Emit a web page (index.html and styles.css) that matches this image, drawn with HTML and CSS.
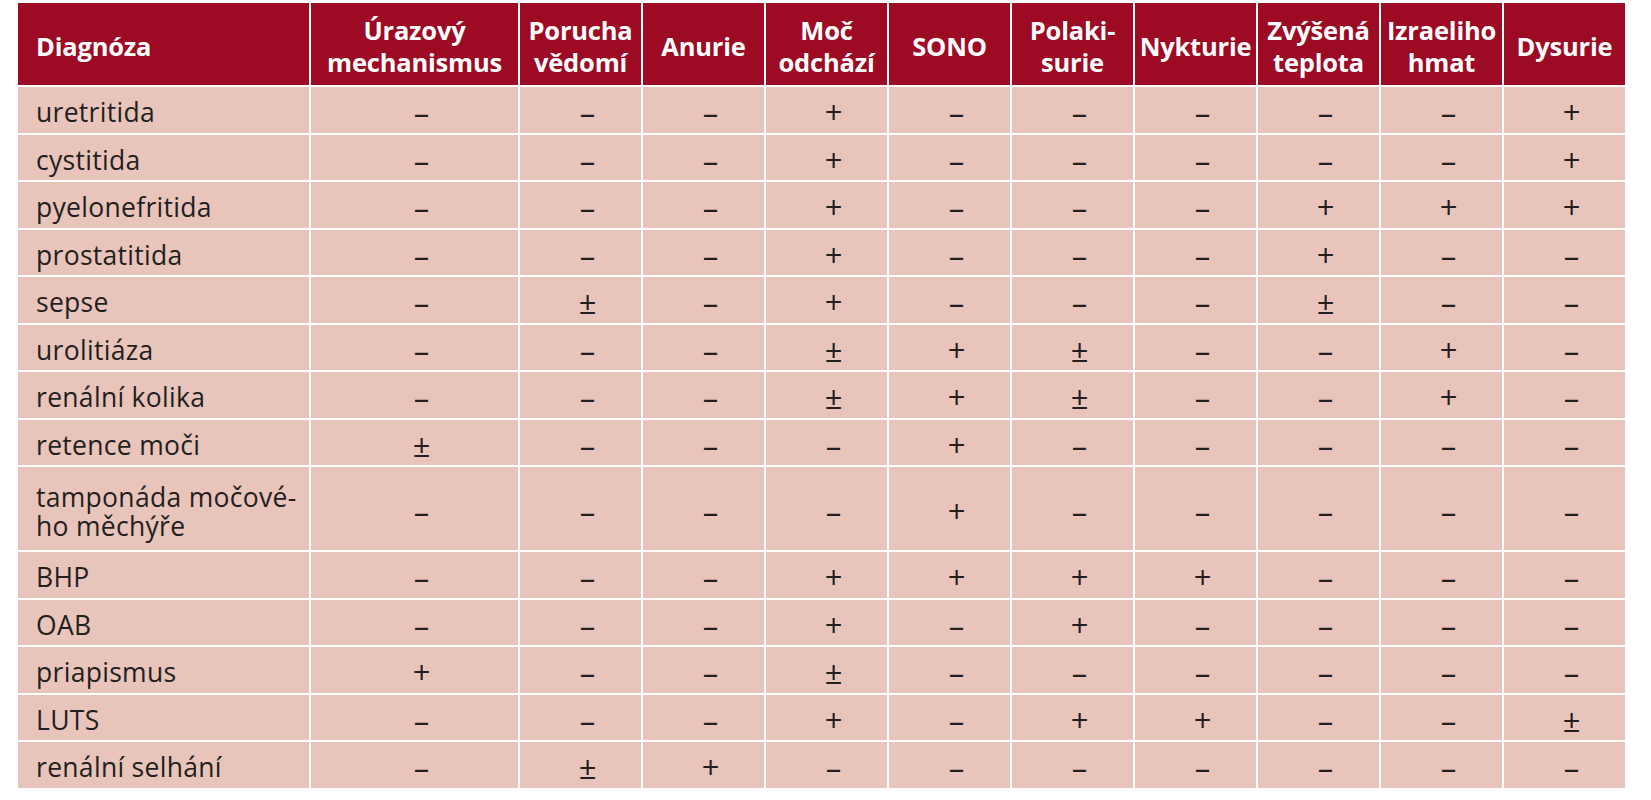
FILE: index.html
```html
<!DOCTYPE html>
<html lang="cs">
<head>
<meta charset="utf-8">
<title>Diagnóza</title>
<link rel="stylesheet" href="styles.css">
</head>
<body>
<table class="dx">
  <colgroup>
    <col class="c-diag">
    <col class="c-wide">
    <col class="c-std"><col class="c-std"><col class="c-std"><col class="c-std">
    <col class="c-std"><col class="c-std"><col class="c-std"><col class="c-std"><col class="c-std">
  </colgroup>
  <thead>
    <tr>
      <th class="h-diag">Diagnóza</th>
      <th>Úrazový<br>mechanismus</th>
      <th>Porucha<br>vědomí</th>
      <th>Anurie</th>
      <th>Moč<br>odchází</th>
      <th>SONO</th>
      <th>Polaki-<br>surie</th>
      <th>Nykturie</th>
      <th>Zvýšená<br>teplota</th>
      <th>Izraeliho<br>hmat</th>
      <th>Dysurie</th>
    </tr>
  </thead>
  <tbody>
    <tr><td class="d">uretritida</td><td>–</td><td>–</td><td>–</td><td>+</td><td>–</td><td>–</td><td>–</td><td>–</td><td>–</td><td>+</td></tr>
    <tr><td class="d">cystitida</td><td>–</td><td>–</td><td>–</td><td>+</td><td>–</td><td>–</td><td>–</td><td>–</td><td>–</td><td>+</td></tr>
    <tr><td class="d">pyelonefritida</td><td>–</td><td>–</td><td>–</td><td>+</td><td>–</td><td>–</td><td>–</td><td>+</td><td>+</td><td>+</td></tr>
    <tr><td class="d">prostatitida</td><td>–</td><td>–</td><td>–</td><td>+</td><td>–</td><td>–</td><td>–</td><td>+</td><td>–</td><td>–</td></tr>
    <tr><td class="d">sepse</td><td>–</td><td>±</td><td>–</td><td>+</td><td>–</td><td>–</td><td>–</td><td>±</td><td>–</td><td>–</td></tr>
    <tr><td class="d">urolitiáza</td><td>–</td><td>–</td><td>–</td><td>±</td><td>+</td><td>±</td><td>–</td><td>–</td><td>+</td><td>–</td></tr>
    <tr><td class="d">renální kolika</td><td>–</td><td>–</td><td>–</td><td>±</td><td>+</td><td>±</td><td>–</td><td>–</td><td>+</td><td>–</td></tr>
    <tr><td class="d">retence moči</td><td>±</td><td>–</td><td>–</td><td>–</td><td>+</td><td>–</td><td>–</td><td>–</td><td>–</td><td>–</td></tr>
    <tr class="tall"><td class="d"><span class="ln">tamponáda močové-</span><span class="ln">ho měchýře</span></td><td>–</td><td>–</td><td>–</td><td>–</td><td>+</td><td>–</td><td>–</td><td>–</td><td>–</td><td>–</td></tr>
    <tr><td class="d">BHP</td><td>–</td><td>–</td><td>–</td><td>+</td><td>+</td><td>+</td><td>+</td><td>–</td><td>–</td><td>–</td></tr>
    <tr><td class="d">OAB</td><td>–</td><td>–</td><td>–</td><td>+</td><td>–</td><td>+</td><td>–</td><td>–</td><td>–</td><td>–</td></tr>
    <tr><td class="d">priapismus</td><td>+</td><td>–</td><td>–</td><td>±</td><td>–</td><td>–</td><td>–</td><td>–</td><td>–</td><td>–</td></tr>
    <tr><td class="d">LUTS</td><td>–</td><td>–</td><td>–</td><td>+</td><td>–</td><td>+</td><td>+</td><td>–</td><td>–</td><td>±</td></tr>
    <tr><td class="d">renální selhání</td><td>–</td><td>±</td><td>+</td><td>–</td><td>–</td><td>–</td><td>–</td><td>–</td><td>–</td><td>–</td></tr>
  </tbody>
</table>
</body>
</html>
```

FILE: styles.css
```css
html, body {
  margin: 0;
  padding: 0;
  background: #ffffff;
}

body {
  padding: 1px 0 0 16px;
  font-family: "Open Sans", "Noto Sans", "Liberation Sans", sans-serif;
}

.dx {
  table-layout: fixed;
  border-collapse: separate;
  border-spacing: 2px;
  width: 1611px;
}

.c-diag { width: 291px; }
.c-wide { width: 207px; }
.c-std { width: 121px; }

.dx th {
  background: #9c0a24;
  color: #ffffff;
  font-weight: 700;
  font-size: 25.5px;
  line-height: 32px;
  padding: 11px 0 7px;
  text-align: center;
  vertical-align: middle;
  white-space: nowrap;
  letter-spacing: -0.2px;
}

.dx th.h-diag {
  text-align: left;
  padding-left: 18px;
}

.dx td {
  background: #e8c4bb;
  color: #231f20;
  font-size: 31px;
  line-height: 29px;
  height: 29px;
  padding: 11px 0 5.5px 14px;
  text-align: center;
  vertical-align: middle;
  white-space: nowrap;
}

.dx td.d {
  font-size: 26.5px;
  letter-spacing: 0.3px;
  text-align: left;
  padding: 11px 0 5.5px 18px;
}

.dx .ln {
  display: block;
  height: 29px;
  line-height: 29px;
}

.dx tr.tall td {
  height: 58px;
  padding-top: 15.5px;
  padding-bottom: 9.5px;
}
```
